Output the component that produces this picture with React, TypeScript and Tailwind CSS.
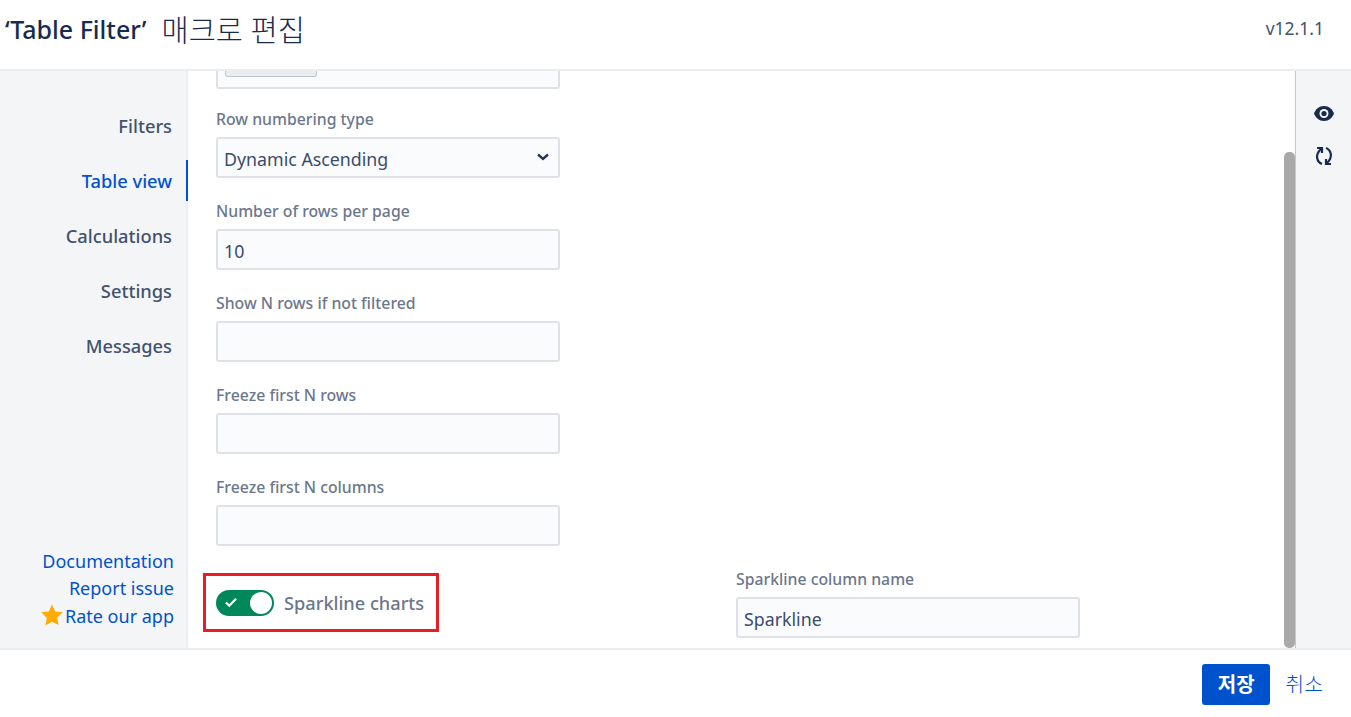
import React from "react";

const font = "font-['Noto_Sans','Noto_Sans_CJK_KR',sans-serif]";

const navItems = ["Filters", "Table view", "Calculations", "Settings", "Messages"];

const fields = [
  { label: "Number of rows per page", value: "10" },
  { label: "Show N rows if not filtered", value: "" },
  { label: "Freeze first N rows", value: "" },
  { label: "Freeze first N columns", value: "" },
];

function FieldLabel({ children }: { children: React.ReactNode }) {
  return <div className="h-[18px] text-[15.8px] leading-[18px] font-medium text-[#6b778c]">{children}</div>;
}

function TextBox({ value }: { value: string }) {
  return (
    <div className="mt-[9px] h-[41px] w-[344px] rounded-[3px] border-2 border-[#dfe1e6] bg-[#fafbfc] px-[6px] text-[17.8px] leading-[40px] text-[#3b4c6b]">
      {value}
    </div>
  );
}

export default function App() {
  return (
    <div className={`${font} flex h-[717px] w-[1351px] flex-col overflow-hidden bg-white`}>
      <header className="flex h-[71px] shrink-0 items-start justify-between border-b-2 border-[#ebecf0] pl-[5px] pr-[27px]">
        <h1 className="mt-[10px] flex items-baseline leading-[36px] text-[#172b4d]">
          <span className="text-[25px] font-medium">‘Table Filter’</span>
          <span className="ml-[15px] translate-y-[2px] text-[29.5px] font-light">매크로 편집</span>
        </h1>
        <span className="mt-[17px] text-[17.5px] leading-[22px] text-[#42526e]">v12.1.1</span>
      </header>

      <div className="relative flex min-h-0 flex-1">
        <aside className="flex w-[188px] shrink-0 flex-col justify-between border-r-2 border-[#ebecf0] bg-[#f4f5f7] pb-[18px] pt-[34px]">
          <nav className="flex flex-col">
            {navItems.map((item) => (
              <div
                key={item}
                className={`mr-[-2px] mb-[14px] flex h-[41px] items-center justify-end pr-[14px] text-[18.3px] font-medium ${
                  item === "Table view" ? "border-r-2 border-[#0052cc] text-[#0052cc]" : "border-r-2 border-transparent text-[#42526e]"
                }`}
              >
                {item}
              </div>
            ))}
          </nav>
          <div className="flex flex-col items-end pr-[12px] text-[18px] leading-[27.5px] text-[#0052cc]">
            <span>Documentation</span>
            <span>Report issue</span>
            <span className="flex items-center gap-[1px]">
              <svg viewBox="0 0 24 24" className="mb-[3px] h-[24px] w-[24px]" fill="#ffab00">
                <path d="M12 1.5l3.2 6.9 7.5.9-5.5 5.2 1.4 7.5L12 18.8l-6.6 3.7 1.4-7.5L1.3 9.3l7.5-.9z" />
              </svg>
              Rate our app
            </span>
          </div>
        </aside>

        <main className="relative min-w-0 flex-1 overflow-hidden pl-[28px]">
          <div className="h-[18px] w-[344px] rounded-b-[3px] border-x-2 border-b-2 border-[#dfe1e6] bg-[#fafbfc] pl-[7px]">
            <div className="h-[6px] w-[92px] rounded-b-[3px] border-x border-b border-[#c1c7d0] bg-[#ebecf0]" />
          </div>

          <div className="mt-[21px]">
            <FieldLabel>Row numbering type</FieldLabel>
            <div className="mt-[9px] flex h-[41px] w-[344px] items-center justify-between rounded-[3px] border-2 border-[#dfe1e6] bg-[#fafbfc] pl-[6px] pr-[9px] text-[17.8px] text-[#3b4c6b]">
              <span className="pt-[3px]">Dynamic Ascending</span>
              <svg viewBox="0 0 12 8" className="mb-[2px] h-[8px] w-[12px]" fill="none" stroke="#253858" strokeWidth="2.4">
                <path d="M1 1.5l5 4.5 5-4.5" />
              </svg>
            </div>
          </div>

          {fields.map((f) => (
            <div key={f.label} className="mt-[24px]">
              <FieldLabel>{f.label}</FieldLabel>
              <TextBox value={f.value} />
            </div>
          ))}

          <div className="mt-[24px] flex items-start">
            <div className="ml-[-13px] mt-[3px] flex h-[59px] w-[236px] items-center gap-[10px] border-[3px] border-[#e81c23] pl-[10px]">
              <div className="flex h-[26px] w-[58px] items-center justify-between rounded-full bg-[#00875a] pl-[8px] pr-[2px]">
                <svg viewBox="0 0 14 12" className="h-[11px] w-[14px]" fill="none" stroke="white" strokeWidth="2.4">
                  <path d="M1.5 6l3.6 3.6L12.5 2" />
                </svg>
                <div className="h-[22px] w-[22px] rounded-full bg-white" />
              </div>
              <span className="pt-[2px] text-[18.2px] font-medium text-[#6b778c]">Sparkline charts</span>
            </div>
            <div className="ml-[297px]">
              <FieldLabel>Sparkline column name</FieldLabel>
              <TextBox value="Sparkline" />
            </div>
          </div>

          <div className="absolute bottom-0 right-0 h-[496px] w-[11px] rounded-[5px] bg-[#a9a9a9]" />
        </main>

        <aside className="flex w-[56px] shrink-0 flex-col items-center gap-[25px] border-l border-[#c8c8c8] bg-[#f4f5f7] pt-[35px]">
          <svg viewBox="0 0 20 15" className="h-[15px] w-[20px]">
            <path d="M10 0C15 0 18.5 3.500 20 7.500 18.500 11.500 15 15 10 15S1.500 11.500 0 7.500C1.500 3.500 5 0 10 0z" fill="#172b4d" />
            <circle cx="10" cy="7.500" r="4.500" fill="#f4f5f7" />
            <circle cx="10" cy="7.500" r="2.600" fill="#172b4d" />
          </svg>
          <svg viewBox="0 0 20 20" className="h-[20px] w-[20px]" fill="none" stroke="#172b4d" strokeWidth="2.200">
            <path d="M8 18C3 16 0.500 9 7 3" />
            <path d="M3 2H8V7" />
            <path d="M12 2C17 4 19.500 11 13 17" />
            <path d="M17 18H12V13" />
          </svg>
        </aside>
      </div>

      <footer className="flex h-[69px] shrink-0 items-start justify-end gap-[15px] border-t-2 border-[#ebecf0] pr-[28px] pt-[14px]">
        <button className="h-[41px] w-[68px] rounded-[3px] bg-[#0052cc] text-[20px] font-bold text-white">저장</button>
        <span className="text-[20.5px] font-light leading-[41px] text-[#0052cc]">취소</span>
      </footer>
    </div>
  );
}
